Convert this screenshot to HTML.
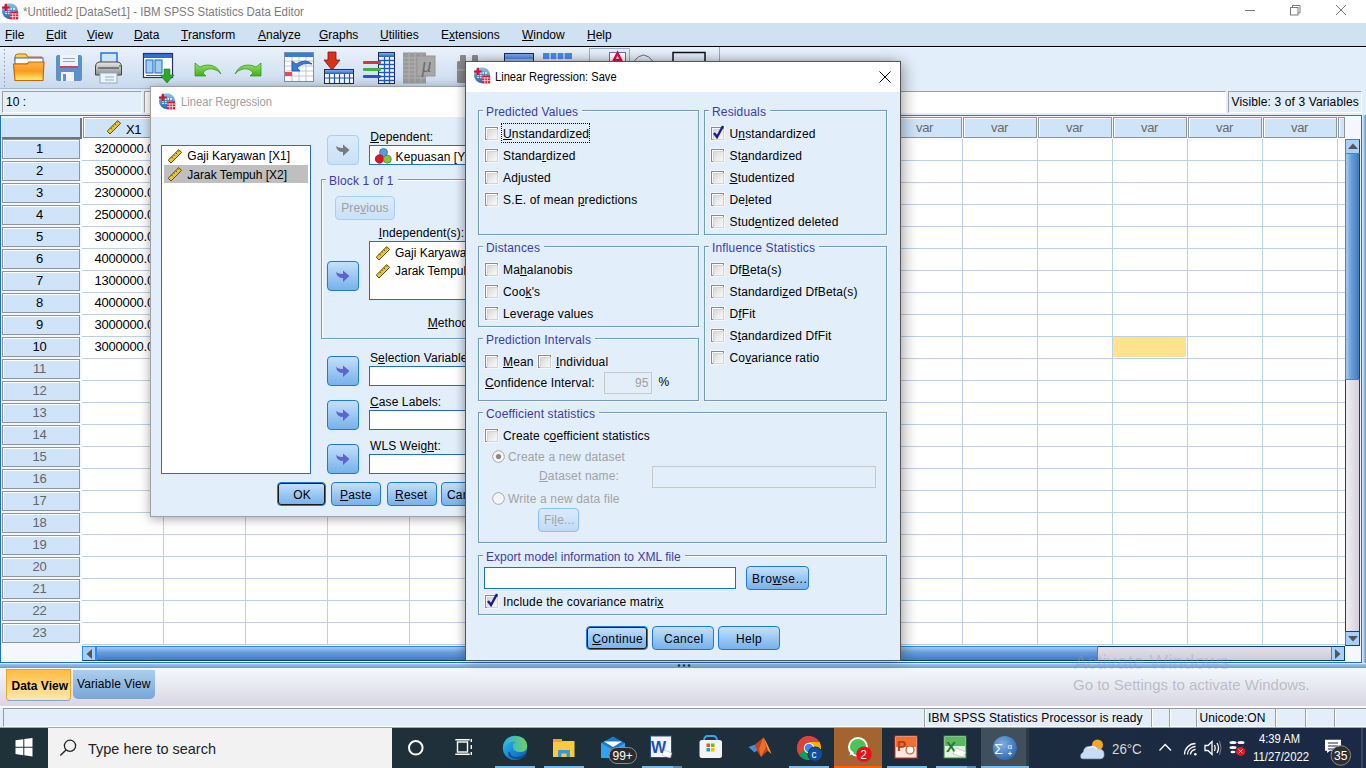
<!DOCTYPE html><html><head><meta charset="utf-8"><style>
*{margin:0;padding:0;box-sizing:border-box}
html,body{width:1366px;height:768px;overflow:hidden;background:#E2EEFA;font-family:"Liberation Sans",sans-serif;font-size:12px;color:#000}
.a{position:absolute}
.t{position:absolute;white-space:nowrap;line-height:12px}
u{text-decoration:underline;text-underline-offset:1px;text-decoration-thickness:1px}
.cb{position:absolute;width:13px;height:13px;border:1px solid #8A8A8A;background:#fff;box-shadow:0 0 0 1px #F4F8FC}
.cb:after{content:"";position:absolute;left:1px;top:1px;width:9px;height:9px;border:1px solid #D4D4D4;background:linear-gradient(135deg,#D8D8D8,#EEEEEE 60%,#F8F8F8)}
.gb{position:absolute;border:1px solid #6F9BCB;box-shadow:1px 1px 0 #fff,inset 1px 1px 0 #fff}
.gl{position:absolute;white-space:nowrap;line-height:12px;color:#3C3CA8;letter-spacing:0.15px;background:#E2EEFA;padding:0 4px 0 3px}
.btn{position:absolute;border:1px solid #1E7AD8;border-radius:4px;background:linear-gradient(#C6E0FB,#9CC8F3 50%,#78B1EA)}
.btnd{position:absolute;border:1px solid #1E7AD8;border-radius:4px;box-shadow:inset 0 0 0 1px #1a1a1a;background:linear-gradient(#C6E0FB,#9CC8F3 50%,#78B1EA)}
</style></head><body>
<div class="a" style="left:0px;top:0px;width:1366px;height:23px;background:#fff"></div>
<svg class="a" style="left:2px;top:3px" width="17" height="17"><defs><linearGradient id="ic" x1="0" y1="0" x2="0" y2="1"><stop offset="0" stop-color="#8EC4EE"/><stop offset="1" stop-color="#2A64A8"/></linearGradient></defs><circle cx="8" cy="8.2" r="8" fill="url(#ic)"/><rect x="3" y="5" width="10" height="6" fill="#E8F2FC" opacity=".85"/><path d="M3 7.5h10M3 9.5h10M5.5 5v6M8 5v6M10.5 5v6" stroke="#3A78C0" stroke-width=".8"/><rect x="8.2" y="8.4" width="8" height="8" fill="#D81E3A"/><path d="M8.2 11h8M8.2 13.6h8M10.8 10v6.4M13.4 10v6.4" stroke="#F8D0D8" stroke-width=".9"/><path d="M3.8 0.8v7.4M0 4.5h7.6" stroke="#D8102A" stroke-width="2.2"/></svg>
<div class="t" style="left:23px;top:6.04px;font-size:12px;color:#7b7b7b;letter-spacing:0px;font-weight:400;transform:scaleX(0.955);transform-origin:0 0;">*Untitled2 [DataSet1] - IBM SPSS Statistics Data Editor</div>
<svg class="a" style="left:1240px;top:0" width="126" height="23"><g stroke="#7A7A7A" stroke-width="1" fill="none"><path d="M5 10.5H15"/><rect x="50.5" y="7.5" width="7.5" height="7.5"/><path d="M52.5 7.5V5.5H60V13H58"/><path d="M96 5L106 15M106 5L96 15"/></g></svg>
<div class="a" style="left:0px;top:23px;width:1366px;height:23px;background:#D0E1F2"></div>
<div class="a" style="left:0px;top:46px;width:1366px;height:1px;background:#000"></div>
<div class="t" style="left:5px;top:29.04px;font-size:12px;color:#000;letter-spacing:0px;font-weight:400;"><u>F</u>ile</div>
<div class="t" style="left:46px;top:29.04px;font-size:12px;color:#000;letter-spacing:0px;font-weight:400;"><u>E</u>dit</div>
<div class="t" style="left:87px;top:29.04px;font-size:12px;color:#000;letter-spacing:0px;font-weight:400;"><u>V</u>iew</div>
<div class="t" style="left:134px;top:29.04px;font-size:12px;color:#000;letter-spacing:0px;font-weight:400;"><u>D</u>ata</div>
<div class="t" style="left:181px;top:29.04px;font-size:12px;color:#000;letter-spacing:0px;font-weight:400;"><u>T</u>ransform</div>
<div class="t" style="left:258px;top:29.04px;font-size:12px;color:#000;letter-spacing:0px;font-weight:400;"><u>A</u>nalyze</div>
<div class="t" style="left:319px;top:29.04px;font-size:12px;color:#000;letter-spacing:0px;font-weight:400;"><u>G</u>raphs</div>
<div class="t" style="left:380px;top:29.04px;font-size:12px;color:#000;letter-spacing:0px;font-weight:400;"><u>U</u>tilities</div>
<div class="t" style="left:441px;top:29.04px;font-size:12px;color:#000;letter-spacing:0px;font-weight:400;">E<u>x</u>tensions</div>
<div class="t" style="left:522px;top:29.04px;font-size:12px;color:#000;letter-spacing:0px;font-weight:400;"><u>W</u>indow</div>
<div class="t" style="left:587px;top:29.04px;font-size:12px;color:#000;letter-spacing:0px;font-weight:400;"><u>H</u>elp</div>
<div class="a" style="left:0px;top:47px;width:1366px;height:41px;background:#E2EEFA"></div>
<div class="a" style="left:0px;top:47px;width:1366px;height:1px;background:#F0F6FC"></div>
<div class="a" style="left:0px;top:47px;width:880px;height:41px;background:linear-gradient(#EAF2FB,#C9DAEE)"></div>
<div class="a" style="left:0px;top:88px;width:880px;height:1px;background:#A9B9CC"></div>
<svg class="a" style="left:0;top:47px" width="730" height="41">
<defs>
<linearGradient id="fo" x1="0" y1="0" x2="0" y2="1"><stop offset="0" stop-color="#FFB347"/><stop offset=".5" stop-color="#F99A1E"/><stop offset="1" stop-color="#FFF27A"/></linearGradient>
<linearGradient id="fy" x1="0" y1="0" x2="0" y2="1"><stop offset="0" stop-color="#FFE25A"/><stop offset="1" stop-color="#F5A623"/></linearGradient>
<linearGradient id="bl" x1="0" y1="0" x2="0" y2="1"><stop offset="0" stop-color="#7FB2F0"/><stop offset="1" stop-color="#1E5FC0"/></linearGradient>
<linearGradient id="gr" x1="0" y1="0" x2="0" y2="1"><stop offset="0" stop-color="#9BE36A"/><stop offset="1" stop-color="#3FAE1E"/></linearGradient>
<linearGradient id="pr" x1="0" y1="0" x2="0" y2="1"><stop offset="0" stop-color="#E8E8E8"/><stop offset="1" stop-color="#8C8C8C"/></linearGradient>
</defs>
<g stroke="#8A9AAE" stroke-width="1" stroke-dasharray="1.5 2.5"><path d="M4.5 2V40"/></g>
<!-- folder -->
<path d="M15 10 Q15 7 18 7 L26 7 L28 10 L42 10 L42 14 L15 14Z" fill="url(#fy)" stroke="#C8640A" stroke-width="1"/>
<rect x="15" y="11" width="28" height="6" fill="#fff" stroke="#2A6AD0" stroke-width="1"/>
<path d="M13.5 17 L27 17 L29 15 L44 15 L43 33.5 L15 33.5 Z" fill="url(#fo)" stroke="#C8640A" stroke-width="1.2"/>
<!-- floppy -->
<rect x="56" y="8" width="26" height="26" rx="2" fill="#5B92C9"/>
<rect x="60" y="8" width="18" height="11" fill="#EEF4FA"/>
<path d="M63 11.5h12M63 14.5h12" stroke="#9AA8B8" stroke-width="1"/>
<rect x="60" y="19" width="18" height="2" fill="#D8405A"/>
<rect x="61" y="25" width="13" height="9" fill="#F2F2F2"/><rect x="63" y="27" width="3" height="7" fill="#5B92C9"/>
<!-- printer -->
<rect x="101" y="6" width="16" height="11" fill="#CFE6FA" stroke="#1A6AE0" stroke-width="1.4"/>
<path d="M95.5 20 Q95.5 15 100 15 L117 15 Q121.5 15 121.5 20 L121.5 28 L95.5 28Z" fill="url(#pr)" stroke="#444" stroke-width="1"/>
<rect x="98" y="20" width="21" height="2" fill="#777"/>
<rect x="119" y="18" width="2" height="2" fill="#40C040"/>
<rect x="100" y="26" width="17" height="10" fill="#EAF4FC" stroke="#9AB" stroke-width="1"/>
<path d="M105 30h9M105 33h9" stroke="#89A" stroke-width=".8"/>
<!-- data editor icon -->
<rect x="143.5" y="6.5" width="29" height="24" fill="#fff" stroke="#2A2A7A" stroke-width="1.2"/>
<rect x="144" y="7" width="28" height="4" fill="#2F6FD0"/>
<rect x="146" y="13" width="7" height="13" fill="#9BD0F0" stroke="#2060C0"/>
<rect x="155" y="13" width="7" height="13" fill="#9BD0F0" stroke="#2060C0"/>
<rect x="146" y="28" width="16" height="1" fill="#2060C0"/>
<path d="M164 22 L170 22 L170 28 L174 28 L167 36 L160 28 L164 28Z" fill="#2EA82A" stroke="#1C7A1A" stroke-width=".6"/>
<!-- undo -->
<path d="M195 16 L195 29 L206 29 L203 26 Q206 21 213 22 Q218 23 221 27 Q217 18 208 18 Q203 18 200 20Z" fill="url(#gr)" stroke="#3A9A20" stroke-width=".8"/>
<!-- redo -->
<path d="M261 16 L261 29 L250 29 L253 26 Q250 21 243 22 Q238 23 235 27 Q239 18 248 18 Q253 18 256 20Z" fill="url(#gr)" stroke="#3A9A20" stroke-width=".8"/>
<!-- go to case -->
<rect x="284.5" y="5.5" width="29" height="29" fill="#fff" stroke="#8090A0"/>
<rect x="285" y="6" width="28" height="4" fill="#3A7AE0"/>
<path d="M285 14h28M285 19h28M285 24h28M285 29h28M292 10v24M299 10v24M306 10v24" stroke="#C0C8D0" stroke-width="1"/>
<rect x="285" y="25" width="7" height="4" fill="#E84A5A"/>
<path d="M292 14 L292 24 L300 24 L297 21 Q302 15 312 17 Q306 11 296 17Z" fill="#3A7AD8" stroke="#1A50A8" stroke-width=".8"/>
<!-- insert cases -->
<path d="M328 5h8v8h4l-8 10l-8-10h4Z" fill="#D8301A" stroke="#801808" stroke-width=".8"/>
<rect x="324.5" y="22.5" width="29" height="14" fill="#fff" stroke="#1A2A6A" stroke-width="1"/>
<rect x="325" y="23" width="28" height="4" fill="url(#bl)"/>
<path d="M325 31h28M329.5 27v9M334.5 27v9M339.5 27v9M344.5 27v9M349.5 27v9" stroke="#1A50C0" stroke-width="1.2"/>
<!-- variables -->
<rect x="378.5" y="5.5" width="16" height="31" fill="#fff" stroke="#1A2A6A"/>
<rect x="379" y="6" width="15" height="4" fill="url(#bl)"/>
<path d="M379 13.5h15M379 17.5h15M379 21.5h15M379 25.5h15M379 29.5h15M379 33.5h15M384.5 10v26M389.5 10v26" stroke="#1A5AC8" stroke-width="1.3"/>
<rect x="363" y="14" width="18" height="3" rx="1" fill="#E0303A"/>
<rect x="363" y="21" width="18" height="3" rx="1" fill="#40B040"/>
<rect x="363" y="28" width="18" height="3" rx="1" fill="#3050D0"/>
<!-- mu gray -->
<rect x="403" y="5.5" width="23" height="31" fill="#9A9A9A"/>
<path d="M403 11h23M403 15h23M403 19h23M403 23h23M403 27h23M403 31h23M409 5v31M415 5v31M421 5v31" stroke="#B0B0B0" stroke-width="1"/>
<rect x="417" y="9" width="18" height="20" fill="#A8A8A8" stroke="#959595"/>
<text x="421.5" y="25" font-family="Liberation Serif" font-style="italic" font-size="20" fill="#6E6E6E">μ</text>
<!-- binoculars -->
<g fill="#8A8A8A"><rect x="460" y="8" width="6" height="7" rx="1"/><rect x="457" y="14" width="9" height="22" rx="1.5"/><rect x="472" y="8" width="6" height="7" rx="1"/><rect x="469" y="14" width="10" height="22" rx="1.5"/></g><rect x="457" y="22" width="9" height="2" fill="#A0A0A0"/>
<!-- blue table -->
<rect x="504.5" y="6.5" width="29" height="10" fill="url(#bl)" stroke="#1A2A6A"/>
<path d="M505 13h28" stroke="#fff" stroke-width="1"/>
<!-- table with arrows -->
<rect x="543" y="6" width="29" height="6" fill="#4A8AE8"/>
<rect x="543" y="12" width="29" height="5" fill="#E4E4E4"/>
<path d="M550 6v11M557 6v11M564 6v11" stroke="#fff" stroke-width="1"/>
<!-- pressed A -->
<path d="M589.5 41V1.5H629.5V41" fill="none" stroke="#9AAFC8" stroke-width="1"/>
<rect x="609.5" y="5.5" width="16" height="12" fill="#fff" stroke="#5A7AB0"/>
<path d="M612 17 L617.5 6 L623 17 M614 13h7" stroke="#E0104A" stroke-width="2.4" fill="none"/>
<path d="M633.5 15 Q643.5 1 653.5 15" fill="none" stroke="#6A6A6A" stroke-width="1"/>
<rect x="673" y="5.5" width="32" height="10" fill="none" stroke="#111" stroke-width="1.5"/>
<path d="M719.5 0V41" stroke="#9AAAB8" stroke-width="1"/>
</svg>
<div class="a" style="left:2px;top:91px;width:140px;height:22px;border:1px solid #A0A0A0;border-right-color:#fff;border-bottom-color:#fff;background:#E2EEFA"></div>
<div class="t" style="left:6px;top:95.84px;font-size:12px;color:#000;letter-spacing:0px;font-weight:400;">10 :</div>
<div class="a" style="left:144px;top:91px;width:1082px;height:22px;border:1px solid #A0A0A0;border-right-color:#fff;border-bottom-color:#fff;background:#fff"></div>
<div class="a" style="left:1228px;top:91px;width:134px;height:22px;border:1px solid #A0A0A0;border-right-color:#fff;border-bottom-color:#fff;background:#E2EEFA"></div>
<div class="t" style="left:1231.6px;top:96.44px;font-size:12px;color:#000;letter-spacing:0.12px;font-weight:400;">Visible: 3 of 3 Variables</div>
<div class="a" style="left:0px;top:115px;width:1362px;height:548px;border:1px solid #1F6FCF;border-top-color:#2A78D4;background:#F4F8FC"></div>
<div class="a" style="left:82px;top:138px;width:1263px;height:507px;background:#fff"></div>
<div class="a" style="left:163px;top:139px;width:1px;height:506px;background:#B8D0E8"></div>
<div class="a" style="left:245px;top:139px;width:1px;height:506px;background:#B8D0E8"></div>
<div class="a" style="left:327px;top:139px;width:1px;height:506px;background:#B8D0E8"></div>
<div class="a" style="left:409px;top:139px;width:1px;height:506px;background:#B8D0E8"></div>
<div class="a" style="left:491px;top:139px;width:1px;height:506px;background:#B8D0E8"></div>
<div class="a" style="left:573px;top:139px;width:1px;height:506px;background:#B8D0E8"></div>
<div class="a" style="left:655px;top:139px;width:1px;height:506px;background:#B8D0E8"></div>
<div class="a" style="left:737px;top:139px;width:1px;height:506px;background:#B8D0E8"></div>
<div class="a" style="left:812px;top:139px;width:1px;height:506px;background:#B8D0E8"></div>
<div class="a" style="left:887px;top:139px;width:1px;height:506px;background:#B8D0E8"></div>
<div class="a" style="left:962px;top:139px;width:1px;height:506px;background:#B8D0E8"></div>
<div class="a" style="left:1037px;top:139px;width:1px;height:506px;background:#B8D0E8"></div>
<div class="a" style="left:1112px;top:139px;width:1px;height:506px;background:#B8D0E8"></div>
<div class="a" style="left:1187px;top:139px;width:1px;height:506px;background:#B8D0E8"></div>
<div class="a" style="left:1262px;top:139px;width:1px;height:506px;background:#B8D0E8"></div>
<div class="a" style="left:1337px;top:139px;width:1px;height:506px;background:#B8D0E8"></div>
<div class="a" style="left:82px;top:160px;width:1263px;height:1px;background:#B8D0E8"></div>
<div class="a" style="left:82px;top:182px;width:1263px;height:1px;background:#B8D0E8"></div>
<div class="a" style="left:82px;top:204px;width:1263px;height:1px;background:#B8D0E8"></div>
<div class="a" style="left:82px;top:226px;width:1263px;height:1px;background:#B8D0E8"></div>
<div class="a" style="left:82px;top:248px;width:1263px;height:1px;background:#B8D0E8"></div>
<div class="a" style="left:82px;top:270px;width:1263px;height:1px;background:#B8D0E8"></div>
<div class="a" style="left:82px;top:292px;width:1263px;height:1px;background:#B8D0E8"></div>
<div class="a" style="left:82px;top:314px;width:1263px;height:1px;background:#B8D0E8"></div>
<div class="a" style="left:82px;top:336px;width:1263px;height:1px;background:#B8D0E8"></div>
<div class="a" style="left:82px;top:358px;width:1263px;height:1px;background:#B8D0E8"></div>
<div class="a" style="left:82px;top:380px;width:1263px;height:1px;background:#B8D0E8"></div>
<div class="a" style="left:82px;top:402px;width:1263px;height:1px;background:#B8D0E8"></div>
<div class="a" style="left:82px;top:424px;width:1263px;height:1px;background:#B8D0E8"></div>
<div class="a" style="left:82px;top:446px;width:1263px;height:1px;background:#B8D0E8"></div>
<div class="a" style="left:82px;top:468px;width:1263px;height:1px;background:#B8D0E8"></div>
<div class="a" style="left:82px;top:490px;width:1263px;height:1px;background:#B8D0E8"></div>
<div class="a" style="left:82px;top:512px;width:1263px;height:1px;background:#B8D0E8"></div>
<div class="a" style="left:82px;top:534px;width:1263px;height:1px;background:#B8D0E8"></div>
<div class="a" style="left:82px;top:556px;width:1263px;height:1px;background:#B8D0E8"></div>
<div class="a" style="left:82px;top:578px;width:1263px;height:1px;background:#B8D0E8"></div>
<div class="a" style="left:82px;top:600px;width:1263px;height:1px;background:#B8D0E8"></div>
<div class="a" style="left:82px;top:622px;width:1263px;height:1px;background:#B8D0E8"></div>
<div class="a" style="left:82px;top:644px;width:1263px;height:1px;background:#B8D0E8"></div>
<div class="a" style="left:2px;top:118px;width:80px;height:21px;background:#CFE3F9;border-bottom:2px solid #6F757C;border-right:2px solid #6F757C"></div>
<div class="a" style="left:83px;top:117px;width:80px;height:21px;background:#CFE3F9;border:1px solid #8C949C;box-shadow:inset 1px 1px 0 #fff"></div>
<div class="a" style="left:164px;top:117px;width:81px;height:21px;background:#CFE3F9;border:1px solid #8C949C;box-shadow:inset 1px 1px 0 #fff"></div>
<div class="a" style="left:246px;top:117px;width:81px;height:21px;background:#CFE3F9;border:1px solid #8C949C;box-shadow:inset 1px 1px 0 #fff"></div>
<div class="a" style="left:328px;top:117px;width:81px;height:21px;background:#CFE3F9;border:1px solid #8C949C;box-shadow:inset 1px 1px 0 #fff"></div>
<div class="a" style="left:410px;top:117px;width:81px;height:21px;background:#CFE3F9;border:1px solid #8C949C;box-shadow:inset 1px 1px 0 #fff"></div>
<div class="a" style="left:492px;top:117px;width:81px;height:21px;background:#CFE3F9;border:1px solid #8C949C;box-shadow:inset 1px 1px 0 #fff"></div>
<div class="a" style="left:574px;top:117px;width:81px;height:21px;background:#CFE3F9;border:1px solid #8C949C;box-shadow:inset 1px 1px 0 #fff"></div>
<div class="a" style="left:656px;top:117px;width:81px;height:21px;background:#CFE3F9;border:1px solid #8C949C;box-shadow:inset 1px 1px 0 #fff"></div>
<div class="a" style="left:738px;top:117px;width:74px;height:21px;background:#CFE3F9;border:1px solid #8C949C;box-shadow:inset 1px 1px 0 #fff"></div>
<div class="a" style="left:813px;top:117px;width:74px;height:21px;background:#CFE3F9;border:1px solid #8C949C;box-shadow:inset 1px 1px 0 #fff"></div>
<div class="a" style="left:888px;top:117px;width:74px;height:21px;background:#CFE3F9;border:1px solid #8C949C;box-shadow:inset 1px 1px 0 #fff"></div>
<div class="t" style="left:916.0px;top:122.20px;font-size:13px;color:#6a6a6a;letter-spacing:-0.35px;font-weight:400;">var</div>
<div class="a" style="left:963px;top:117px;width:74px;height:21px;background:#CFE3F9;border:1px solid #8C949C;box-shadow:inset 1px 1px 0 #fff"></div>
<div class="t" style="left:991.0px;top:122.20px;font-size:13px;color:#6a6a6a;letter-spacing:-0.35px;font-weight:400;">var</div>
<div class="a" style="left:1038px;top:117px;width:74px;height:21px;background:#CFE3F9;border:1px solid #8C949C;box-shadow:inset 1px 1px 0 #fff"></div>
<div class="t" style="left:1066.0px;top:122.20px;font-size:13px;color:#6a6a6a;letter-spacing:-0.35px;font-weight:400;">var</div>
<div class="a" style="left:1113px;top:117px;width:74px;height:21px;background:#CFE3F9;border:1px solid #8C949C;box-shadow:inset 1px 1px 0 #fff"></div>
<div class="t" style="left:1141.0px;top:122.20px;font-size:13px;color:#6a6a6a;letter-spacing:-0.35px;font-weight:400;">var</div>
<div class="a" style="left:1188px;top:117px;width:74px;height:21px;background:#CFE3F9;border:1px solid #8C949C;box-shadow:inset 1px 1px 0 #fff"></div>
<div class="t" style="left:1216.0px;top:122.20px;font-size:13px;color:#6a6a6a;letter-spacing:-0.35px;font-weight:400;">var</div>
<div class="a" style="left:1263px;top:117px;width:74px;height:21px;background:#CFE3F9;border:1px solid #8C949C;box-shadow:inset 1px 1px 0 #fff"></div>
<div class="t" style="left:1291.0px;top:122.20px;font-size:13px;color:#6a6a6a;letter-spacing:-0.35px;font-weight:400;">var</div>
<div class="a" style="left:1338px;top:117px;width:7px;height:21px;background:#CFE3F9;border:1px solid #8C949C;box-shadow:inset 1px 1px 0 #fff"></div>
<svg class="a" style="left:106px;top:119px" width="16" height="16"><path d="M1.2 12.2 L11.8 1.6 L14.6 4.4 L4 15 Z" fill="#E8C830" stroke="#5A4A10" stroke-width="1"/><path d="M4.5 8.9 L6 10.4 M6.6 6.8 L7.6 7.8 M8.7 4.7 L10.2 6.2 M10.8 2.6 L11.8 3.6" stroke="#5A4A10" stroke-width="0.9"/></svg>
<div class="t" style="left:126px;top:123.50px;font-size:13px;color:#000;letter-spacing:-0.5px;font-weight:400;">X1</div>
<div class="a" style="left:2px;top:139px;width:78px;height:20px;background:#CFE3F9;border:1px solid #8C949C;box-shadow:inset 1px 1px 0 #fff"></div>
<div class="t" style="left:0.5px;width:78px;text-align:center;top:143.40px;font-size:13px;letter-spacing:-0.2px;color:#000">1</div>
<div class="a" style="left:2px;top:161px;width:78px;height:20px;background:#CFE3F9;border:1px solid #8C949C;box-shadow:inset 1px 1px 0 #fff"></div>
<div class="t" style="left:0.5px;width:78px;text-align:center;top:165.40px;font-size:13px;letter-spacing:-0.2px;color:#000">2</div>
<div class="a" style="left:2px;top:183px;width:78px;height:20px;background:#CFE3F9;border:1px solid #8C949C;box-shadow:inset 1px 1px 0 #fff"></div>
<div class="t" style="left:0.5px;width:78px;text-align:center;top:187.40px;font-size:13px;letter-spacing:-0.2px;color:#000">3</div>
<div class="a" style="left:2px;top:205px;width:78px;height:20px;background:#CFE3F9;border:1px solid #8C949C;box-shadow:inset 1px 1px 0 #fff"></div>
<div class="t" style="left:0.5px;width:78px;text-align:center;top:209.40px;font-size:13px;letter-spacing:-0.2px;color:#000">4</div>
<div class="a" style="left:2px;top:227px;width:78px;height:20px;background:#CFE3F9;border:1px solid #8C949C;box-shadow:inset 1px 1px 0 #fff"></div>
<div class="t" style="left:0.5px;width:78px;text-align:center;top:231.40px;font-size:13px;letter-spacing:-0.2px;color:#000">5</div>
<div class="a" style="left:2px;top:249px;width:78px;height:20px;background:#CFE3F9;border:1px solid #8C949C;box-shadow:inset 1px 1px 0 #fff"></div>
<div class="t" style="left:0.5px;width:78px;text-align:center;top:253.40px;font-size:13px;letter-spacing:-0.2px;color:#000">6</div>
<div class="a" style="left:2px;top:271px;width:78px;height:20px;background:#CFE3F9;border:1px solid #8C949C;box-shadow:inset 1px 1px 0 #fff"></div>
<div class="t" style="left:0.5px;width:78px;text-align:center;top:275.40px;font-size:13px;letter-spacing:-0.2px;color:#000">7</div>
<div class="a" style="left:2px;top:293px;width:78px;height:20px;background:#CFE3F9;border:1px solid #8C949C;box-shadow:inset 1px 1px 0 #fff"></div>
<div class="t" style="left:0.5px;width:78px;text-align:center;top:297.40px;font-size:13px;letter-spacing:-0.2px;color:#000">8</div>
<div class="a" style="left:2px;top:315px;width:78px;height:20px;background:#CFE3F9;border:1px solid #8C949C;box-shadow:inset 1px 1px 0 #fff"></div>
<div class="t" style="left:0.5px;width:78px;text-align:center;top:319.40px;font-size:13px;letter-spacing:-0.2px;color:#000">9</div>
<div class="a" style="left:2px;top:337px;width:78px;height:20px;background:#CFE3F9;border:1px solid #8C949C;box-shadow:inset 1px 1px 0 #fff"></div>
<div class="t" style="left:0.5px;width:78px;text-align:center;top:341.40px;font-size:13px;letter-spacing:-0.2px;color:#000">10</div>
<div class="a" style="left:2px;top:359px;width:78px;height:20px;background:#CFE3F9;border:1px solid #8C949C;box-shadow:inset 1px 1px 0 #fff"></div>
<div class="t" style="left:0.5px;width:78px;text-align:center;top:363.40px;font-size:13px;letter-spacing:-0.2px;color:#666">11</div>
<div class="a" style="left:2px;top:381px;width:78px;height:20px;background:#CFE3F9;border:1px solid #8C949C;box-shadow:inset 1px 1px 0 #fff"></div>
<div class="t" style="left:0.5px;width:78px;text-align:center;top:385.40px;font-size:13px;letter-spacing:-0.2px;color:#666">12</div>
<div class="a" style="left:2px;top:403px;width:78px;height:20px;background:#CFE3F9;border:1px solid #8C949C;box-shadow:inset 1px 1px 0 #fff"></div>
<div class="t" style="left:0.5px;width:78px;text-align:center;top:407.40px;font-size:13px;letter-spacing:-0.2px;color:#666">13</div>
<div class="a" style="left:2px;top:425px;width:78px;height:20px;background:#CFE3F9;border:1px solid #8C949C;box-shadow:inset 1px 1px 0 #fff"></div>
<div class="t" style="left:0.5px;width:78px;text-align:center;top:429.40px;font-size:13px;letter-spacing:-0.2px;color:#666">14</div>
<div class="a" style="left:2px;top:447px;width:78px;height:20px;background:#CFE3F9;border:1px solid #8C949C;box-shadow:inset 1px 1px 0 #fff"></div>
<div class="t" style="left:0.5px;width:78px;text-align:center;top:451.40px;font-size:13px;letter-spacing:-0.2px;color:#666">15</div>
<div class="a" style="left:2px;top:469px;width:78px;height:20px;background:#CFE3F9;border:1px solid #8C949C;box-shadow:inset 1px 1px 0 #fff"></div>
<div class="t" style="left:0.5px;width:78px;text-align:center;top:473.40px;font-size:13px;letter-spacing:-0.2px;color:#666">16</div>
<div class="a" style="left:2px;top:491px;width:78px;height:20px;background:#CFE3F9;border:1px solid #8C949C;box-shadow:inset 1px 1px 0 #fff"></div>
<div class="t" style="left:0.5px;width:78px;text-align:center;top:495.40px;font-size:13px;letter-spacing:-0.2px;color:#666">17</div>
<div class="a" style="left:2px;top:513px;width:78px;height:20px;background:#CFE3F9;border:1px solid #8C949C;box-shadow:inset 1px 1px 0 #fff"></div>
<div class="t" style="left:0.5px;width:78px;text-align:center;top:517.40px;font-size:13px;letter-spacing:-0.2px;color:#666">18</div>
<div class="a" style="left:2px;top:535px;width:78px;height:20px;background:#CFE3F9;border:1px solid #8C949C;box-shadow:inset 1px 1px 0 #fff"></div>
<div class="t" style="left:0.5px;width:78px;text-align:center;top:539.40px;font-size:13px;letter-spacing:-0.2px;color:#666">19</div>
<div class="a" style="left:2px;top:557px;width:78px;height:20px;background:#CFE3F9;border:1px solid #8C949C;box-shadow:inset 1px 1px 0 #fff"></div>
<div class="t" style="left:0.5px;width:78px;text-align:center;top:561.40px;font-size:13px;letter-spacing:-0.2px;color:#666">20</div>
<div class="a" style="left:2px;top:579px;width:78px;height:20px;background:#CFE3F9;border:1px solid #8C949C;box-shadow:inset 1px 1px 0 #fff"></div>
<div class="t" style="left:0.5px;width:78px;text-align:center;top:583.40px;font-size:13px;letter-spacing:-0.2px;color:#666">21</div>
<div class="a" style="left:2px;top:601px;width:78px;height:20px;background:#CFE3F9;border:1px solid #8C949C;box-shadow:inset 1px 1px 0 #fff"></div>
<div class="t" style="left:0.5px;width:78px;text-align:center;top:605.40px;font-size:13px;letter-spacing:-0.2px;color:#666">22</div>
<div class="a" style="left:2px;top:623px;width:78px;height:20px;background:#CFE3F9;border:1px solid #8C949C;box-shadow:inset 1px 1px 0 #fff"></div>
<div class="t" style="left:0.5px;width:78px;text-align:center;top:627.40px;font-size:13px;letter-spacing:-0.2px;color:#666">23</div>
<div class="t" style="left:94.4px;top:143.10px;font-size:13px;color:#000;letter-spacing:-0.2px;font-weight:400;">3200000.00</div>
<div class="t" style="left:94.4px;top:165.10px;font-size:13px;color:#000;letter-spacing:-0.2px;font-weight:400;">3500000.00</div>
<div class="t" style="left:94.4px;top:187.10px;font-size:13px;color:#000;letter-spacing:-0.2px;font-weight:400;">2300000.00</div>
<div class="t" style="left:94.4px;top:209.10px;font-size:13px;color:#000;letter-spacing:-0.2px;font-weight:400;">2500000.00</div>
<div class="t" style="left:94.4px;top:231.10px;font-size:13px;color:#000;letter-spacing:-0.2px;font-weight:400;">3000000.00</div>
<div class="t" style="left:94.4px;top:253.10px;font-size:13px;color:#000;letter-spacing:-0.2px;font-weight:400;">4000000.00</div>
<div class="t" style="left:94.4px;top:275.10px;font-size:13px;color:#000;letter-spacing:-0.2px;font-weight:400;">1300000.00</div>
<div class="t" style="left:94.4px;top:297.10px;font-size:13px;color:#000;letter-spacing:-0.2px;font-weight:400;">4000000.00</div>
<div class="t" style="left:94.4px;top:319.10px;font-size:13px;color:#000;letter-spacing:-0.2px;font-weight:400;">3000000.00</div>
<div class="t" style="left:94.4px;top:341.10px;font-size:13px;color:#000;letter-spacing:-0.2px;font-weight:400;">3000000.00</div>
<div class="a" style="left:1113px;top:337px;width:73px;height:20px;background:#FDE38E"></div>
<div class="a" style="left:1345px;top:139px;width:15px;height:507px;background:linear-gradient(90deg,#F0EEF4,#D4D0DC);border:1px solid #0C3E80;border-top:none;border-bottom:none"></div>
<div class="a" style="left:1345px;top:153px;width:15px;height:227px;background:linear-gradient(90deg,#A8CCF2,#6A9EDA 40%,#3E7CC4);border:1px solid #2A8AF0;border-right-color:#10407A"></div>
<div class="a" style="left:1345px;top:139px;width:15px;height:15px;background:#A8D0FA;border:1px solid #2A8AF0;border-right-color:#10407A"></div>
<svg class="a" style="left:1348px;top:143px" width="10" height="6"><path d="M0 6L5 0.5L10 6Z" fill="#555"/></svg>
<div class="a" style="left:1345px;top:631px;width:15px;height:15px;background:#A8D0FA;border:1px solid #0C3E80;border-left-color:#2A8AF0"></div>
<svg class="a" style="left:1348px;top:636px" width="10" height="6"><path d="M0 0L5 5.5L10 0Z" fill="#555"/></svg>
<div class="a" style="left:82px;top:646px;width:1263px;height:15px;background:linear-gradient(#E2E0E8,#D0CCD8);border:1px solid #0C3E80;border-left:none;border-right:none"></div>
<div class="a" style="left:96px;top:646px;width:1002px;height:15px;background:linear-gradient(#A8CCF2,#6A9EDA 40%,#3E7CC4);border:1px solid #2A8AF0;border-bottom-color:#10407A"></div>
<div class="a" style="left:82px;top:646px;width:14px;height:15px;background:#A8D0FA;border:1px solid #2A8AF0;border-bottom-color:#10407A"></div>
<svg class="a" style="left:86px;top:649px" width="6" height="10"><path d="M6 0L0.5 5L6 10Z" fill="#555"/></svg>
<div class="a" style="left:1331px;top:646px;width:14px;height:15px;background:#A8D0FA;border:1px solid #0C3E80;border-left-color:#2A8AF0"></div>
<svg class="a" style="left:1335px;top:649px" width="6" height="10"><path d="M0 0L5.5 5L0 10Z" fill="#555"/></svg>
<div class="a" style="left:1362px;top:115px;width:4px;height:548px;background:linear-gradient(90deg,#E8F4FF,#9CC8F0 50%,#5E94CC)"></div>
<div class="a" style="left:0px;top:663px;width:1366px;height:1px;background:#D8EAFA"></div>
<div class="a" style="left:0px;top:664px;width:1366px;height:4px;background:linear-gradient(#9CC4EC,#6E9ACA)"></div>
<div class="a" style="left:0px;top:668px;width:1366px;height:38px;background:linear-gradient(#F4F8FC,#D8D6E4)"></div>
<div class="a" style="left:6px;top:669px;width:65px;height:32px;background:linear-gradient(#FDBC40,#FFE8AC);border:1px solid #E8A62A;border-bottom-color:#7AA6D8;border-radius:0 0 4px 4px"></div>
<div class="t" style="left:11.5px;top:680.24px;font-size:12px;color:#000;letter-spacing:0px;font-weight:700;">Data View</div>
<div class="a" style="left:73px;top:670px;width:82px;height:29px;background:linear-gradient(#AECDEC,#76A6D8);border-radius:0 0 5px 5px"></div>
<div class="t" style="left:77px;top:678.34px;font-size:12px;color:#000;letter-spacing:0.1px;font-weight:400;">Variable View</div>
<div class="a" style="left:0px;top:706px;width:1366px;height:22px;background:#E4EEFA"></div>
<div class="a" style="left:0px;top:706px;width:1366px;height:2px;background:#F8FBFE"></div>
<div class="a" style="left:3px;top:708px;width:1363px;height:19px;border-top:1px solid #9A9A9A;border-left:1px solid #9A9A9A;border-bottom:1px solid #fff"></div>
<div class="a" style="left:924px;top:709px;width:2px;height:18px;border-left:1px solid #A0A0A0;border-right:1px solid #fff"></div>
<div class="a" style="left:1151px;top:709px;width:2px;height:18px;border-left:1px solid #A0A0A0;border-right:1px solid #fff"></div>
<div class="a" style="left:1169px;top:709px;width:2px;height:18px;border-left:1px solid #A0A0A0;border-right:1px solid #fff"></div>
<div class="a" style="left:1196px;top:709px;width:2px;height:18px;border-left:1px solid #A0A0A0;border-right:1px solid #fff"></div>
<div class="a" style="left:1275px;top:709px;width:2px;height:18px;border-left:1px solid #A0A0A0;border-right:1px solid #fff"></div>
<div class="a" style="left:1305px;top:709px;width:2px;height:18px;border-left:1px solid #A0A0A0;border-right:1px solid #fff"></div>
<div class="a" style="left:1334px;top:709px;width:2px;height:18px;border-left:1px solid #A0A0A0;border-right:1px solid #fff"></div>
<div class="t" style="left:928px;top:711.94px;font-size:12px;color:#000;letter-spacing:0.1px;font-weight:400;">IBM SPSS Statistics Processor is ready</div>
<div class="t" style="left:1199.5px;top:711.94px;font-size:12px;color:#000;letter-spacing:0.05px;font-weight:400;">Unicode:ON</div>
<div class="t" style="left:1073.7px;top:655.57px;font-size:20px;color:rgba(150,150,160,.33);letter-spacing:0px;font-weight:400;transform:scaleX(0.985);transform-origin:0 0;">Activate Windows</div>
<div class="t" style="left:1073px;top:678.70px;font-size:15px;color:rgba(150,150,160,.55);letter-spacing:0px;font-weight:400;transform:scaleX(1.0);transform-origin:0 0;">Go to Settings to activate Windows.</div>
<svg class="a" style="left:677px;top:663px" width="14" height="5"><g fill="#1A3A70"><circle cx="2" cy="2.5" r="1.3"/><circle cx="7" cy="2.5" r="1.3"/><circle cx="12" cy="2.5" r="1.3"/></g></svg>
<div class="a" style="left:0px;top:727px;width:1366px;height:1px;background:#9FA6AD"></div>
<div class="a" style="left:0px;top:728px;width:1366px;height:40px;background:linear-gradient(90deg,#1F3139 0%,#1F2F3A 50%,#1C2B40 80%,#1B2946 100%)"></div>
<div class="a" style="left:48px;top:728px;width:344px;height:40px;background:#F2F2F2"></div>
<div class="t" style="left:88.3px;top:743.20px;font-size:15px;color:#222;letter-spacing:0px;font-weight:400;transform:scaleX(0.965);transform-origin:0 0;">Type here to search</div>
<svg class="a" style="left:0;top:728px" width="1366" height="40">
<defs>
<linearGradient id="edg" x1="0" y1="0" x2="1" y2="1"><stop offset="0" stop-color="#36C6E8"/><stop offset=".5" stop-color="#1A8AD8"/><stop offset="1" stop-color="#0E5AA8"/></linearGradient>
<linearGradient id="edg2" x1="0" y1="0" x2="1" y2="0"><stop offset="0" stop-color="#2BB0E0"/><stop offset="1" stop-color="#6ED068"/></linearGradient>
</defs>
<path d="M15.5 12.3 L23.3 11.2 L23.3 18.7 L15.5 18.7Z M24.3 11.1 L32.5 9.9 L32.5 18.7 L24.3 18.7Z M15.5 19.7 L23.3 19.7 L23.3 27.2 L15.5 26.1Z M24.3 19.7 L32.5 19.7 L32.5 28.5 L24.3 27.3Z" fill="#fff"/>
<circle cx="70" cy="17.8" r="5.6" fill="none" stroke="#222" stroke-width="1.3"/>
<path d="M66 22 L60.3 27.5" stroke="#222" stroke-width="1.4"/>
<circle cx="415.8" cy="19.8" r="6.8" fill="none" stroke="#fff" stroke-width="2"/>
<g stroke="#fff" stroke-width="1.4" fill="none"><rect x="457.5" y="14" width="10" height="10"/><path d="M455.3 11.7h14.4M455.3 26.3h14.4M471.3 11v3M471.3 17v4M471.3 24v3"/></g>
<!-- edge -->
<circle cx="515" cy="19.9" r="12.2" fill="url(#edg)"/>
<path d="M503.5 17 Q507 8.5 516 8 Q526 8 527.3 18 Q527 24 520 24 Q514 24 513 20 Q512 15 517 14 Q508 12 504 20Z" fill="url(#edg2)"/>
<path d="M509 24 Q509 30 517 30 Q522 30 525 27" fill="none" stroke="#0E4E98" stroke-width="2"/>
<rect x="495" y="38" width="40" height="2" fill="#76B9ED"/>
<!-- explorer -->
<path d="M553 11 L560 11 L562 13 L574.5 13 L574.5 29 L553 29Z" fill="#FFC83D"/>
<rect x="553" y="11" width="9" height="3" fill="#E8A820"/>
<path d="M558 22 L570 22 L570 29 L566.5 29 L566.5 25.5 L561.5 25.5 L561.5 29 L558 29Z" fill="#3A96DD"/>
<rect x="544" y="38" width="40" height="2" fill="#76B9ED"/>
<!-- mail -->
<path d="M601 15 L613 8.5 L625 15 L625 30 L601 30Z" fill="#1E78D0"/>
<path d="M601 15 L613 22 L625 15 L625 30 L601 30Z" fill="#33A3F0"/>
<path d="M604 13.5 L622 13.5 L613 19Z" fill="#fff"/>
<rect x="609" y="19.5" width="27.5" height="16" rx="8" fill="#2B2B2B" stroke="#8C8C8C" stroke-width="1"/>
<text x="612.5" y="32" font-family="Liberation Sans" font-size="12" fill="#fff">99+</text>
<!-- word -->
<rect x="650.5" y="8" width="21" height="21.5" fill="#F4F8FE" stroke="#1D4FA8" stroke-width="1"/>
<text x="651" y="25" font-family="Liberation Sans" font-weight="bold" font-size="16" fill="#1B4FB8">W</text>
<path d="M664 22 L672 25 L670 30 L662 27Z" fill="#fff" stroke="#9AB" stroke-width=".5"/>
<rect x="642" y="38" width="31" height="2" fill="#76B9ED"/><rect x="673" y="38" width="9" height="2" fill="#5A8AB8"/>
<!-- store -->
<path d="M704 13 Q704 8 708 8 L713 8 Q717 8 717 13" fill="none" stroke="#2FA8F0" stroke-width="1.8"/>
<rect x="699.5" y="12" width="22.5" height="18" rx="2.5" fill="#F4F4F4"/>
<rect x="706.5" y="15.5" width="3.5" height="3.5" fill="#F25022"/><rect x="711" y="15.5" width="3.5" height="3.5" fill="#7FBA00"/>
<rect x="706.5" y="20" width="3.5" height="3.5" fill="#00A4EF"/><rect x="711" y="20" width="3.5" height="3.5" fill="#FFB900"/>
<!-- matlab -->
<path d="M748.5 19 L755 16.5 L759 21 L754.5 24.5Z" fill="#3D8FD8"/>
<path d="M755 16.5 L763.5 9.5 Q767 15 771.5 26 L767.5 23 L761 29 L757 23Z" fill="#C8401A"/>
<path d="M763.5 9.5 Q766 16 768 22 L771.5 26 Q767 15 763.5 9.5Z" fill="#F3A33A"/>
<path d="M759 21 L763.5 9.5 L766 19 L761 29Z" fill="#E8702A"/>
<!-- chrome -->
<circle cx="809" cy="20" r="12" fill="#DB4437"/>
<path d="M809 20 L798.6 26 A12 12 0 0 0 815 30.4Z" fill="#0F9D58"/>
<path d="M809 20 L815 30.4 A12 12 0 0 0 819.4 14 L809 14Z" fill="#F4B400"/>
<path d="M809 20 L798.6 26 A12 12 0 0 1 809 8 L809 14Z" fill="#DB4437"/>
<circle cx="809" cy="20" r="5.2" fill="#fff"/><circle cx="809" cy="20" r="4.2" fill="#4285F4"/>
<circle cx="815.2" cy="26.2" r="7.2" fill="#0D50A0" stroke="#1F2F3A" stroke-width="1"/>
<text x="811.6" y="30.3" font-family="Liberation Sans" font-size="10" fill="#fff">c</text>
<rect x="789" y="38" width="40" height="2" fill="#76B9ED"/>
<!-- whatsapp -->
<rect x="834" y="0" width="48" height="38" fill="#A3652F"/>
<rect x="834" y="38" width="48" height="2" fill="#F7630C"/>
<circle cx="858" cy="19" r="10" fill="#fff"/>
<circle cx="858" cy="19" r="8" fill="#4BC35B"/>
<path d="M849.5 27.5 L851 22 L854 25Z" fill="#fff"/>
<circle cx="864" cy="26.2" r="7.8" fill="#E8101A"/>
<text x="860.2" y="31" font-family="Liberation Sans" font-size="12" fill="#fff">2</text>
<!-- powerpoint -->
<rect x="895" y="8" width="22" height="22" fill="#F8E8E0" stroke="#C8381A" stroke-width="1"/>
<rect x="896" y="9" width="20" height="10" fill="#F07030"/>
<text x="897" y="23" font-family="Liberation Sans" font-weight="bold" font-size="14" fill="#C03A10">P</text>
<circle cx="910" cy="22" r="4" fill="#fff" stroke="#D05020" stroke-width="1.2"/>
<rect x="887" y="38" width="40" height="2" fill="#76B9ED"/>
<!-- excel -->
<rect x="944" y="8" width="22" height="22" fill="#E6F2E0" stroke="#2A8A3A" stroke-width="1"/>
<rect x="945" y="9" width="20" height="9" fill="#5CB85C"/>
<text x="946" y="24" font-family="Liberation Sans" font-weight="bold" font-size="15" fill="#1F7A2A">X</text>
<path d="M956 20 L966 24 L963 29 L953 26Z" fill="#fff" stroke="#8A8" stroke-width=".5"/>
<rect x="936" y="38" width="31" height="2" fill="#76B9ED"/><rect x="967" y="38" width="9" height="2" fill="#5A8AB8"/>
<!-- spss -->
<rect x="981" y="0" width="45" height="38" fill="#414F5C"/><rect x="1026" y="0" width="3" height="38" fill="#2E3B46"/>
<defs><radialGradient id="sp" cx=".4" cy=".35" r=".7"><stop offset="0" stop-color="#7FB0E4"/><stop offset="1" stop-color="#2D66AE"/></radialGradient></defs>
<circle cx="1004.8" cy="19.9" r="12" fill="url(#sp)"/>
<text x="994.2" y="25.6" font-family="Liberation Sans" font-size="14" fill="#F0F6FC">Σ</text>
<text x="1007.5" y="21" font-family="Liberation Sans" font-size="8" fill="#F0F6FC">α</text>
<path d="M1008 25.5h4M1010 23.5v4" stroke="#F0F6FC" stroke-width=".9"/>
<rect x="981" y="38" width="48" height="2" fill="#76B9ED"/>
<!-- weather -->
<circle cx="1097.5" cy="17" r="5.5" fill="#F5A623"/>
<path d="M1081 30 Q1079.5 26 1083.5 24 Q1084 18 1090 18.5 Q1095 16 1098 21 Q1104 21 1104 26 Q1104.5 30.5 1100 30.8 L1084 30.8 Q1081 30.8 1081 30Z" fill="#C8DDF5" stroke="#9FC0E8" stroke-width=".6"/>
<path d="M1088 20 Q1093 17 1097 21" fill="none" stroke="#fff" stroke-width="1"/>
<g stroke="#fff" stroke-width="1.3" fill="none">
<path d="M1159.5 22.5 L1165.2 16.5 L1171 22.5"/>
<path d="M1184.5 26.5 A11 11 0 0 1 1195.5 15.5 M1187.5 26.5 A8 8 0 0 1 1195.5 18.5 M1190.5 26.5 A5 5 0 0 1 1195.5 21.5"/>
<path d="M1205 17.5h3l4-4v13l-4-4h-3Z M1214.5 17 Q1216 20 1214.5 23 M1217 15 Q1220 20 1217 25"/>
</g>
<circle cx="1195.3" cy="26.2" r="1.3" fill="#fff"/>
<path d="M1219.5 13.2 Q1222.5 20 1219.5 26.8" fill="none" stroke="#999" stroke-width=".8"/>
<g fill="#fff"><ellipse cx="1233" cy="14.5" rx="3.5" ry="1.5"/><ellipse cx="1241" cy="14.5" rx="3.5" ry="1.5"/><ellipse cx="1233" cy="19.5" rx="3.5" ry="1.5"/><ellipse cx="1233" cy="24" rx="2.5" ry="1.2"/></g>
<circle cx="1240.6" cy="23.3" r="4.6" fill="#E81123"/>
<path d="M1238.6 21.3l4 4M1242.6 21.3l-4 4" stroke="#fff" stroke-width="1"/>
<!-- notification -->
<path d="M1325 11.8 H1341 V22.8 H1330 L1327 25 V22.8 H1325Z" fill="#fff"/>
<path d="M1328 15h10M1328 18h10M1328 21h6" stroke="#1B2946" stroke-width="1"/>
<circle cx="1340.8" cy="27.5" r="9.8" fill="#2F2F2F" stroke="#8A8A8A" stroke-width="1"/>
<text x="1334" y="32" font-family="Liberation Sans" font-size="12" fill="#fff">35</text>
<rect x="1361.5" y="0" width="1" height="40" fill="#5A6A80"/>
</svg>
<div class="t" style="left:1112.4px;top:742.85px;font-size:14px;color:#D8D8D8;letter-spacing:0px;font-weight:400;transform:scaleX(0.95);transform-origin:0 0;">26°C</div>
<div class="t" style="left:1258.9px;top:732.84px;font-size:12px;color:#fff;letter-spacing:0px;font-weight:400;transform:scaleX(0.93);transform-origin:0 0;">4:39 AM</div>
<div class="t" style="left:1252.9px;top:750.54px;font-size:12px;color:#fff;letter-spacing:0px;font-weight:400;transform:scaleX(0.95);transform-origin:0 0;">11/27/2022</div>
<div class="a" style="left:150px;top:86px;width:320px;height:431px;background:#E2EEFA;border:1px solid #A0A0A0;box-shadow:0 2px 10px rgba(0,0,0,.35)"></div>
<div class="a" style="left:151px;top:87px;width:318px;height:30px;background:#fff"></div>
<svg class="a" style="left:159px;top:93px" width="17" height="17"><defs><linearGradient id="ic" x1="0" y1="0" x2="0" y2="1"><stop offset="0" stop-color="#8EC4EE"/><stop offset="1" stop-color="#2A64A8"/></linearGradient></defs><circle cx="8" cy="8.2" r="8" fill="url(#ic)"/><rect x="3" y="5" width="10" height="6" fill="#E8F2FC" opacity=".85"/><path d="M3 7.5h10M3 9.5h10M5.5 5v6M8 5v6M10.5 5v6" stroke="#3A78C0" stroke-width=".8"/><rect x="8.2" y="8.4" width="8" height="8" fill="#D81E3A"/><path d="M8.2 11h8M8.2 13.6h8M10.8 10v6.4M13.4 10v6.4" stroke="#F8D0D8" stroke-width=".9"/><path d="M3.8 0.8v7.4M0 4.5h7.6" stroke="#D8102A" stroke-width="2.2"/></svg>
<div class="t" style="left:180.5px;top:95.54px;font-size:12px;color:#A0A0A0;letter-spacing:0px;font-weight:400;transform:scaleX(0.935);transform-origin:0 0;">Linear Regression</div>
<div class="a" style="left:161px;top:145px;width:150px;height:329px;background:#fff;border:1px solid #2470C8"></div>
<div class="a" style="left:164px;top:165px;width:144px;height:18px;background:#BFBFBF"></div>
<svg class="a" style="left:167px;top:148px" width="16" height="16"><path d="M1.2 12.2 L11.8 1.6 L14.6 4.4 L4 15 Z" fill="#E8C830" stroke="#5A4A10" stroke-width="1"/><path d="M4.5 8.9 L6 10.4 M6.6 6.8 L7.6 7.8 M8.7 4.7 L10.2 6.2 M10.8 2.6 L11.8 3.6" stroke="#5A4A10" stroke-width="0.9"/></svg>
<div class="t" style="left:187.3px;top:150.44px;font-size:12px;color:#000;letter-spacing:0px;font-weight:400;">Gaji Karyawan [X1]</div>
<svg class="a" style="left:167px;top:166px" width="16" height="16"><path d="M1.2 12.2 L11.8 1.6 L14.6 4.4 L4 15 Z" fill="#E8C830" stroke="#5A4A10" stroke-width="1"/><path d="M4.5 8.9 L6 10.4 M6.6 6.8 L7.6 7.8 M8.7 4.7 L10.2 6.2 M10.8 2.6 L11.8 3.6" stroke="#5A4A10" stroke-width="0.9"/></svg>
<div class="t" style="left:187.3px;top:168.64px;font-size:12px;color:#000;letter-spacing:0px;font-weight:400;">Jarak Tempuh [X2]</div>
<div class="a" style="left:327px;top:135px;width:32px;height:30px;border:1px solid #A8CFF5;border-radius:4px;background:linear-gradient(#DCEBFB,#C9E0F8)"></div>
<svg class="a" style="left:336px;top:144px" width="14" height="13"><path d="M0 2 Q1 8 7 8 L7 12 L13.5 6 L7 0.5 L7 4 Q3 4.5 0 2Z" fill="#7A7A7A"/></svg>
<div class="t" style="left:370.2px;top:130.94px;font-size:12px;color:#000;letter-spacing:0.1px;font-weight:400;"><u>D</u>ependent:</div>
<div class="a" style="left:369px;top:145px;width:101px;height:20px;background:#fff;border:1px solid #1F6FC9;border-right:none"></div>
<svg class="a" style="left:375px;top:148px" width="17" height="16"><circle cx="8.5" cy="4.5" r="4" fill="#5A9BE0" stroke="#2F6FB8" stroke-width=".8"/><circle cx="4.5" cy="11" r="4.2" fill="#D8182A" stroke="#901020" stroke-width=".8"/><circle cx="12.3" cy="11.2" r="4" fill="#86C244" stroke="#4E8A22" stroke-width=".8"/></svg>
<div class="t" style="left:395.6px;top:150.74px;font-size:12px;color:#000;letter-spacing:0.1px;font-weight:400;">Kepuasan [Y]</div>
<div class="gb" style="left:321px;top:179px;width:160px;height:160px"></div>
<div class="gl" style="left:326px;top:174.5px">Block 1 of 1</div>
<div class="a" style="left:335px;top:196px;width:60px;height:24px;border:1px solid #A8CFF5;border-radius:4px;background:linear-gradient(#DCEBFB,#C9E0F8)"></div>
<div class="t" style="left:341.2px;top:202.34px;font-size:12px;color:#A0A0A0;letter-spacing:0.1px;font-weight:400;">Pre<u>v</u>ious</div>
<div class="t" style="left:378.7px;top:226.74px;font-size:12px;color:#000;letter-spacing:0.1px;font-weight:400;"><u>I</u>ndependent(s):</div>
<div class="a" style="left:369px;top:241px;width:101px;height:59px;background:#fff;border:1px solid #1F6FC9;border-right:none"></div>
<svg class="a" style="left:375px;top:245px" width="16" height="16"><path d="M1.2 12.2 L11.8 1.6 L14.6 4.4 L4 15 Z" fill="#E8C830" stroke="#5A4A10" stroke-width="1"/><path d="M4.5 8.9 L6 10.4 M6.6 6.8 L7.6 7.8 M8.7 4.7 L10.2 6.2 M10.8 2.6 L11.8 3.6" stroke="#5A4A10" stroke-width="0.9"/></svg>
<div class="t" style="left:395px;top:246.84px;font-size:12px;color:#000;letter-spacing:0px;font-weight:400;">Gaji Karyawan [X1]</div>
<svg class="a" style="left:375px;top:263px" width="16" height="16"><path d="M1.2 12.2 L11.8 1.6 L14.6 4.4 L4 15 Z" fill="#E8C830" stroke="#5A4A10" stroke-width="1"/><path d="M4.5 8.9 L6 10.4 M6.6 6.8 L7.6 7.8 M8.7 4.7 L10.2 6.2 M10.8 2.6 L11.8 3.6" stroke="#5A4A10" stroke-width="0.9"/></svg>
<div class="t" style="left:395px;top:264.84px;font-size:12px;color:#000;letter-spacing:0px;font-weight:400;">Jarak Tempuh [X2]</div>
<div class="btn" style="left:327px;top:261px;width:32px;height:30px"></div>
<svg class="a" style="left:336px;top:270px" width="14" height="13"><path d="M0 2 Q1 8 7 8 L7 12 L13.5 6 L7 0.5 L7 4 Q3 4.5 0 2Z" fill="#6161D0"/></svg>
<div class="t" style="left:427.7px;top:316.84px;font-size:12px;color:#000;letter-spacing:0.1px;font-weight:400;"><u>M</u>ethod:</div>
<div class="btn" style="left:327px;top:356px;width:32px;height:30px"></div>
<svg class="a" style="left:336px;top:365px" width="14" height="13"><path d="M0 2 Q1 8 7 8 L7 12 L13.5 6 L7 0.5 L7 4 Q3 4.5 0 2Z" fill="#6161D0"/></svg>
<div class="t" style="left:370px;top:351.54px;font-size:12px;color:#000;letter-spacing:0.1px;font-weight:400;">S<u>e</u>lection Variable:</div>
<div class="a" style="left:369px;top:366px;width:101px;height:20px;background:#fff;border:1px solid #1F6FC9;border-right:none"></div>
<div class="btn" style="left:327px;top:400px;width:32px;height:30px"></div>
<svg class="a" style="left:336px;top:409px" width="14" height="13"><path d="M0 2 Q1 8 7 8 L7 12 L13.5 6 L7 0.5 L7 4 Q3 4.5 0 2Z" fill="#6161D0"/></svg>
<div class="t" style="left:370px;top:395.54px;font-size:12px;color:#000;letter-spacing:0.1px;font-weight:400;"><u>C</u>ase Labels:</div>
<div class="a" style="left:369px;top:410px;width:101px;height:20px;background:#fff;border:1px solid #1F6FC9;border-right:none"></div>
<div class="btn" style="left:327px;top:444px;width:32px;height:30px"></div>
<svg class="a" style="left:336px;top:453px" width="14" height="13"><path d="M0 2 Q1 8 7 8 L7 12 L13.5 6 L7 0.5 L7 4 Q3 4.5 0 2Z" fill="#6161D0"/></svg>
<div class="t" style="left:370px;top:439.54px;font-size:12px;color:#000;letter-spacing:0.1px;font-weight:400;">WLS Weig<u>h</u>t:</div>
<div class="a" style="left:369px;top:454px;width:101px;height:20px;background:#fff;border:1px solid #1F6FC9;border-right:none"></div>
<div class="btnd" style="left:277px;top:482px;width:49px;height:24px"></div>
<div class="t" style="left:293.2px;top:489.04px;font-size:12px;color:#000;letter-spacing:0.2px;font-weight:400;">OK</div>
<div class="btn" style="left:331px;top:482px;width:50px;height:24px"></div>
<div class="t" style="left:340px;top:489.04px;font-size:12px;color:#000;letter-spacing:0.2px;font-weight:400;"><u>P</u>aste</div>
<div class="btn" style="left:387px;top:482px;width:50px;height:24px"></div>
<div class="t" style="left:395px;top:489.04px;font-size:12px;color:#000;letter-spacing:0.2px;font-weight:400;"><u>R</u>eset</div>
<div class="btn" style="left:441px;top:482px;width:50px;height:24px"></div>
<div class="t" style="left:447px;top:489.04px;font-size:12px;color:#000;letter-spacing:0.2px;font-weight:400;">Cancel</div>
<div class="a" style="left:465px;top:61px;width:436px;height:600px;background:#E2EEFA;border:1px solid #555;box-shadow:5px 0 14px -2px rgba(0,0,0,.33),-4px 0 9px -2px rgba(0,0,0,.25)"></div>
<div class="a" style="left:466px;top:62px;width:434px;height:30px;background:#fff"></div>
<svg class="a" style="left:474px;top:67px" width="17" height="17"><defs><linearGradient id="ic" x1="0" y1="0" x2="0" y2="1"><stop offset="0" stop-color="#8EC4EE"/><stop offset="1" stop-color="#2A64A8"/></linearGradient></defs><circle cx="8" cy="8.2" r="8" fill="url(#ic)"/><rect x="3" y="5" width="10" height="6" fill="#E8F2FC" opacity=".85"/><path d="M3 7.5h10M3 9.5h10M5.5 5v6M8 5v6M10.5 5v6" stroke="#3A78C0" stroke-width=".8"/><rect x="8.2" y="8.4" width="8" height="8" fill="#D81E3A"/><path d="M8.2 11h8M8.2 13.6h8M10.8 10v6.4M13.4 10v6.4" stroke="#F8D0D8" stroke-width=".9"/><path d="M3.8 0.8v7.4M0 4.5h7.6" stroke="#D8102A" stroke-width="2.2"/></svg>
<div class="t" style="left:495px;top:70.54px;font-size:12px;color:#000;letter-spacing:0px;font-weight:400;transform:scaleX(0.925);transform-origin:0 0;">Linear Regression: Save</div>
<svg class="a" style="left:879px;top:71px" width="12" height="12"><path d="M0.5 0.5L11.5 11.5M11.5 0.5L0.5 11.5" stroke="#000" stroke-width="1"/></svg>
<div class="gb" style="left:478px;top:110px;width:221px;height:125px"></div>
<div class="gl" style="left:483px;top:105.5px">Predicted Values</div>
<div class="gb" style="left:704px;top:110px;width:183px;height:125px"></div>
<div class="gl" style="left:709px;top:105.5px">Residuals</div>
<div class="gb" style="left:478px;top:246px;width:221px;height:81px"></div>
<div class="gl" style="left:483px;top:241.5px">Distances</div>
<div class="gb" style="left:704px;top:246px;width:183px;height:155px"></div>
<div class="gl" style="left:709px;top:241.5px">Influence Statistics</div>
<div class="gb" style="left:478px;top:338px;width:221px;height:63px"></div>
<div class="gl" style="left:483px;top:333.5px">Prediction Intervals</div>
<div class="gb" style="left:478px;top:412px;width:409px;height:131px"></div>
<div class="gl" style="left:483px;top:407.5px">Coefficient statistics</div>
<div class="gb" style="left:478px;top:555px;width:409px;height:60px"></div>
<div class="gl" style="left:483px;top:550.5px"><span style="letter-spacing:0.05px">Export model information to XML file</span></div>
<div class="cb" style="left:485px;top:127px"></div>
<div class="t" style="left:503px;top:128.24px;font-size:12px;color:#000;letter-spacing:0.15px;font-weight:400;"><u>U</u>nstandardized</div>
<div class="cb" style="left:485px;top:149px"></div>
<div class="t" style="left:503px;top:150.24px;font-size:12px;color:#000;letter-spacing:0.15px;font-weight:400;">Standa<u>r</u>dized</div>
<div class="cb" style="left:485px;top:171px"></div>
<div class="t" style="left:503px;top:172.24px;font-size:12px;color:#000;letter-spacing:0.15px;font-weight:400;">Ad<u>j</u>usted</div>
<div class="cb" style="left:485px;top:193px"></div>
<div class="t" style="left:503px;top:194.24px;font-size:12px;color:#000;letter-spacing:0.15px;font-weight:400;">S.E. of mean <u>p</u>redictions</div>
<div class="a" style="left:501px;top:123px;width:89px;height:20px;border:1px dotted #000"></div>
<div class="cb" style="left:711px;top:127px"></div>
<svg class="a" style="left:712px;top:125px" width="13" height="15"><path d="M2 8 L5 12 L11 1" stroke="#1A1A9A" stroke-width="2.4" fill="none"/></svg>
<div class="t" style="left:729.5px;top:128.24px;font-size:12px;color:#000;letter-spacing:0.15px;font-weight:400;">U<u>n</u>standardized</div>
<div class="cb" style="left:711px;top:149px"></div>
<div class="t" style="left:729.5px;top:150.24px;font-size:12px;color:#000;letter-spacing:0.15px;font-weight:400;">St<u>a</u>ndardized</div>
<div class="cb" style="left:711px;top:171px"></div>
<div class="t" style="left:729.5px;top:172.24px;font-size:12px;color:#000;letter-spacing:0.15px;font-weight:400;"><u>S</u>tudentized</div>
<div class="cb" style="left:711px;top:193px"></div>
<div class="t" style="left:729.5px;top:194.24px;font-size:12px;color:#000;letter-spacing:0.15px;font-weight:400;">De<u>l</u>eted</div>
<div class="cb" style="left:711px;top:215px"></div>
<div class="t" style="left:729.5px;top:216.24px;font-size:12px;color:#000;letter-spacing:0.15px;font-weight:400;">Stud<u>e</u>ntized deleted</div>
<div class="cb" style="left:485px;top:263px"></div>
<div class="t" style="left:503px;top:264.24px;font-size:12px;color:#000;letter-spacing:0.15px;font-weight:400;">Ma<u>h</u>alanobis</div>
<div class="cb" style="left:485px;top:285px"></div>
<div class="t" style="left:503px;top:286.24px;font-size:12px;color:#000;letter-spacing:0.15px;font-weight:400;">Coo<u>k</u>'s</div>
<div class="cb" style="left:485px;top:307px"></div>
<div class="t" style="left:503px;top:308.24px;font-size:12px;color:#000;letter-spacing:0.15px;font-weight:400;">Levera<u>g</u>e values</div>
<div class="cb" style="left:711px;top:263px"></div>
<div class="t" style="left:729.5px;top:264.24px;font-size:12px;color:#000;letter-spacing:0.15px;font-weight:400;">Df<u>B</u>eta(s)</div>
<div class="cb" style="left:711px;top:285px"></div>
<div class="t" style="left:729.5px;top:286.24px;font-size:12px;color:#000;letter-spacing:0.15px;font-weight:400;">Standardi<u>z</u>ed DfBeta(s)</div>
<div class="cb" style="left:711px;top:307px"></div>
<div class="t" style="left:729.5px;top:308.24px;font-size:12px;color:#000;letter-spacing:0.15px;font-weight:400;">D<u>f</u>Fit</div>
<div class="cb" style="left:711px;top:329px"></div>
<div class="t" style="left:729.5px;top:330.24px;font-size:12px;color:#000;letter-spacing:0.15px;font-weight:400;">S<u>t</u>andardized DfFit</div>
<div class="cb" style="left:711px;top:351px"></div>
<div class="t" style="left:729.5px;top:352.24px;font-size:12px;color:#000;letter-spacing:0.15px;font-weight:400;">Co<u>v</u>ariance ratio</div>
<div class="cb" style="left:485px;top:355px"></div>
<div class="t" style="left:503px;top:356.24px;font-size:12px;color:#000;letter-spacing:0.15px;font-weight:400;"><u>M</u>ean</div>
<div class="cb" style="left:538px;top:355px"></div>
<div class="t" style="left:556px;top:356.24px;font-size:12px;color:#000;letter-spacing:0.15px;font-weight:400;"><u>I</u>ndividual</div>
<div class="t" style="left:485px;top:376.84px;font-size:12px;color:#000;letter-spacing:0.15px;font-weight:400;"><u>C</u>onfidence Interval:</div>
<div class="a" style="left:604px;top:372px;width:48px;height:22px;border:1px solid #C8C8C8"></div>
<div class="t" style="left:635px;top:377.34px;font-size:12px;color:#A0A0A0;letter-spacing:0px;font-weight:400;">95</div>
<div class="t" style="left:658.5px;top:376.34px;font-size:12px;color:#000;letter-spacing:0.15px;font-weight:400;">%</div>
<div class="cb" style="left:485px;top:429px"></div>
<div class="t" style="left:503px;top:429.84px;font-size:12px;color:#000;letter-spacing:0.15px;font-weight:400;">Create c<u>o</u>efficient statistics</div>
<svg class="a" style="left:492px;top:450px" width="13" height="13"><circle cx="6.5" cy="6.5" r="5.8" fill="#E8E8E8" stroke="#A8A8A8"/><circle cx="6.5" cy="6.5" r="4.5" fill="#F4F4F4" stroke="#fff"/><circle cx="6.5" cy="6.5" r="2.6" fill="#8A8A8A"/></svg>
<div class="t" style="left:508px;top:450.84px;font-size:12px;color:#A3A3A3;letter-spacing:0.15px;font-weight:400;">Create a new dataset</div>
<div class="t" style="left:539px;top:469.84px;font-size:12px;color:#A3A3A3;letter-spacing:0.15px;font-weight:400;"><u>D</u>ataset name:</div>
<div class="a" style="left:652px;top:466px;width:224px;height:22px;border:1px solid #C8C8C8"></div>
<svg class="a" style="left:492px;top:492px" width="13" height="13"><circle cx="6.5" cy="6.5" r="5.8" fill="#E8E8E8" stroke="#A8A8A8"/><circle cx="6.5" cy="6.5" r="4.5" fill="#F4F4F4" stroke="#fff"/></svg>
<div class="t" style="left:508px;top:492.84px;font-size:12px;color:#A3A3A3;letter-spacing:0.15px;font-weight:400;">Write a new data file</div>
<div class="a" style="left:538px;top:508px;width:41px;height:24px;border:1px solid #8CC0F0;border-radius:4px;background:linear-gradient(#DCEBFB,#BFDAF7)"></div>
<div class="t" style="left:544px;top:514.44px;font-size:12px;color:#A3A3A3;letter-spacing:0.15px;font-weight:400;">Fi<u>l</u>e...</div>
<div class="a" style="left:484px;top:567px;width:252px;height:22px;background:#fff;border:1px solid #1E6FC8"></div>
<div class="btn" style="left:746px;top:566px;width:63px;height:24px"></div>
<div class="t" style="left:752px;top:572.54px;font-size:12px;color:#000;letter-spacing:0.6px;font-weight:400;">Bro<u>w</u>se...</div>
<div class="cb" style="left:485px;top:595px"></div>
<svg class="a" style="left:486px;top:593px" width="13" height="15"><path d="M2 8 L5 12 L11 1" stroke="#1A1A9A" stroke-width="2.4" fill="none"/></svg>
<div class="t" style="left:503px;top:595.84px;font-size:12px;color:#000;letter-spacing:0.15px;font-weight:400;">Include the covariance matri<u>x</u></div>
<div class="btnd" style="left:586px;top:626px;width:62px;height:24px"></div>
<div class="t" style="left:592.3px;top:632.64px;font-size:12px;color:#000;letter-spacing:0.35px;font-weight:400;"><u>C</u>ontinue</div>
<div class="btn" style="left:652px;top:626px;width:62px;height:24px"></div>
<div class="t" style="left:664px;top:632.64px;font-size:12px;color:#000;letter-spacing:0.35px;font-weight:400;">Cancel</div>
<div class="btn" style="left:718px;top:626px;width:62px;height:24px"></div>
<div class="t" style="left:736px;top:632.64px;font-size:12px;color:#000;letter-spacing:0.35px;font-weight:400;">Help</div>
</body></html>
